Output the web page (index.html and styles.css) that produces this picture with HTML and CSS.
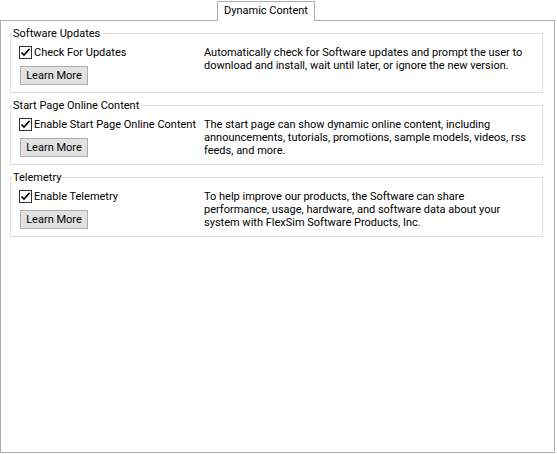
FILE: index.html
```html
<!DOCTYPE html>
<html lang="en">
<head>
    <meta charset="UTF-8">
    <title>Dynamic Content</title>
    <link rel="stylesheet" href="styles.css">
</head>
<body>
    <div class="tabs">
        <div class="tab">Dynamic Content</div>
    </div>
    <div class="panel">
        <div class="group">
            <span class="group-title">Software Updates</span>
            <div class="group-left">
                <label class="check">
                    <span class="box"><svg width="11" height="11" viewBox="0 0 11 11"><path d="M1.5 5.5 L4 8 L9.5 2" fill="none" stroke="#000" stroke-width="1.7"/></svg></span>
                    Check For Updates
                </label>
                <button class="btn">Learn More</button>
            </div>
            <p class="desc">Automatically check for Software updates and prompt the user to<br>download and install, wait until later, or ignore the new version.</p>
        </div>

        <div class="group">
            <span class="group-title">Start Page Online Content</span>
            <div class="group-left">
                <label class="check">
                    <span class="box"><svg width="11" height="11" viewBox="0 0 11 11"><path d="M1.5 5.5 L4 8 L9.5 2" fill="none" stroke="#000" stroke-width="1.7"/></svg></span>
                    Enable Start Page Online Content
                </label>
                <button class="btn">Learn More</button>
            </div>
            <p class="desc">The start page can show dynamic online content, including<br>announcements, tutorials, promotions, sample models, videos, rss<br>feeds, and more.</p>
        </div>

        <div class="group">
            <span class="group-title">Telemetry</span>
            <div class="group-left">
                <label class="check">
                    <span class="box"><svg width="11" height="11" viewBox="0 0 11 11"><path d="M1.5 5.5 L4 8 L9.5 2" fill="none" stroke="#000" stroke-width="1.7"/></svg></span>
                    Enable Telemetry
                </label>
                <button class="btn">Learn More</button>
            </div>
            <p class="desc">To help improve our products, the Software can share<br>performance, usage, hardware, and software data about your<br>system with FlexSim Software Products, Inc.</p>
        </div>
    </div>
</body>
</html>
```
FILE: styles.css
```css
body { margin: 0; background: #fff; color: #000; font-family: Roboto, "Liberation Sans", Arial, sans-serif; font-size: 11px; }
.tabs { display: flex; padding-left: 217px; padding-top: 1px; }
.tab {
    position: relative;
    z-index: 1;
    width: 98px;
    height: 20px;
    margin-bottom: -1px;
    box-sizing: border-box;
    border: 1px solid #adadad;
    border-bottom: none;
    background: #fff;
    text-align: center;
    line-height: 18px;
}
.panel {
    width: 555px;
    height: 433px;
    box-sizing: border-box;
    border: 1px solid #adadad;
    padding-top: 12px;
}
.group {
    position: relative;
    display: flex;
    height: 60px;
    box-sizing: border-box;
    margin: 0 11px 12px 9px;
    padding: 12px 0 0 8px;
    border: 1px solid #dcdcdc;
}
.group-title {
    position: absolute; /* sits over the top border */
    top: -8px;
    left: 1px;
    padding: 0 1px;
    background: #fff;
    line-height: 15px;
}
.group-left { width: 185px; display: flex; flex-direction: column; align-items: flex-start; }
.check { display: flex; align-items: center; height: 13px; line-height: 13px; white-space: nowrap; }
.box {
    display: flex;
    align-items: center;
    justify-content: center;
    width: 13px;
    height: 13px;
    box-sizing: border-box;
    margin-right: 2px;
    border: 1px solid #333;
    background: #fff;
}
.btn {
    width: 68px;
    height: 19px;
    margin: 7px 0 0 1px;
    padding: 0;
    border: 1px solid #adadad;
    background: #e1e1e1;
    font: inherit;
    color: #000;
    line-height: 17px;
}
.desc { margin: 0; line-height: 13px; }
```
